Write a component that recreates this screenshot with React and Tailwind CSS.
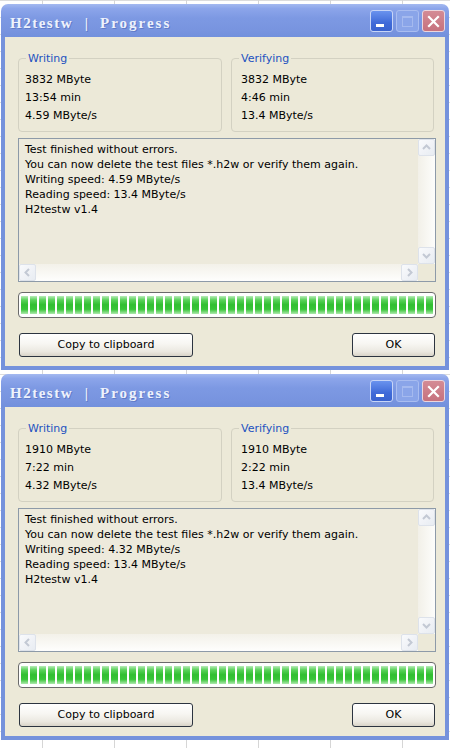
import React from "react";

function TitleText() {
  return (
    <div className="flex font-['Liberation_Serif',serif] font-bold text-[15px] leading-[18px] whitespace-nowrap text-[#eef2fc] [text-shadow:1px_1px_0_#5f7bc8]">
      <span className="w-[63px] tracking-[1.5px]">H2testw</span>
      <span className="w-[27px] text-center"> | </span>
      <span className="w-[74px] tracking-[2px]">Progress</span>
    </div>
  );
}

function TitleBar() {
  return (
    <div className="h-[33px] rounded-t-[7px] bg-[linear-gradient(to_bottom,#a4b9f0_0%,#8ca5ea_14%,#7d99e3_42%,#7894df_80%,#7290dc_100%)] flex items-start justify-between pl-[9px] pr-[4px]">
      <div className="pt-[10px]">
        <TitleText />
      </div>
      <div className="flex gap-[3px] pt-[6px]">
        <div className="w-[23px] h-[22px] rounded-[3px] border border-[#c7d5f7] bg-[linear-gradient(to_bottom,#6a93ee,#3f6ad8_60%,#3a63cf)] relative">
          <div className="absolute left-[5px] bottom-[4px] w-[8px] h-[3px] bg-white"></div>
        </div>
        <div className="w-[23px] h-[22px] rounded-[3px] border border-[#a9bdf0] bg-[#8aa5e9] flex items-center justify-center">
          <div className="w-[11px] h-[11px] border border-[#a5baef] border-t-2"></div>
        </div>
        <div className="w-[23px] h-[22px] rounded-[3px] border border-[#ecd6dc] bg-[linear-gradient(to_bottom,#d48b95,#c6727e)] flex items-center justify-center">
          <svg width="13" height="13" viewBox="0 0 13 13">
            <path d="M2 2 L11 11 M11 2 L2 11" stroke="#ffffff" strokeWidth="2.2" strokeLinecap="square" />
          </svg>
        </div>
      </div>
    </div>
  );
}

function GroupBox({ label, lines, width, pl }) {
  return (
    <div className={`relative h-[74px] rounded-[4px] border border-[#d3d1c2] pt-[12px] ${width} ${pl}`}>
      <div className="absolute -top-[7px] left-[7px] px-[2px] bg-[#ECE9D8] text-[#2352c0] leading-[13px]">
        {label}
      </div>
      {lines.map((l, i) => (
        <div key={i} className="leading-[18px] text-black">
          {l}
        </div>
      ))}
    </div>
  );
}

const ARROWS = {
  up: "M4 9 L7.5 5.5 L11 9",
  down: "M4 6 L7.5 9.5 L11 6",
  left: "M9 4 L5.5 7.5 L9 11",
  right: "M6 4 L9.5 7.5 L6 11",
};

function ScrollBtn({ dir }) {
  return (
    <div className="w-[17px] h-[17px] shrink-0 rounded-[2px] border border-[#dde2ea] bg-[linear-gradient(135deg,#f9fafc,#e8ecf2)] flex items-center justify-center">
      <svg width="15" height="15" viewBox="0 0 15 15">
        <path d={ARROWS[dir]} fill="none" stroke="#c3c9d4" strokeWidth="2" />
      </svg>
    </div>
  );
}

function Memo({ lines }) {
  return (
    <div className="ml-[13px] mt-[6px] w-[418px] h-[144px] border border-[#8d9aa8] bg-[#EDEADC] flex flex-col">
      <div className="flex flex-1 min-h-0">
        <div className="flex-1 pl-[6px] pt-[3px]">
          {lines.map((l, i) => (
            <div key={i} className="leading-[15px] text-black whitespace-nowrap">
              {l}
            </div>
          ))}
        </div>
        <div className="w-[17px] flex flex-col bg-[linear-gradient(to_right,#f2f0e8,#fdfdfb)]">
          <ScrollBtn dir="up" />
          <div className="flex-1"></div>
          <ScrollBtn dir="down" />
        </div>
      </div>
      <div className="h-[17px] flex">
        <div className="flex-1 flex bg-[linear-gradient(to_bottom,#f3f1e9,#fefefd)]">
          <ScrollBtn dir="left" />
          <div className="flex-1"></div>
          <ScrollBtn dir="right" />
        </div>
        <div className="w-[17px] bg-[#ECE9D8]"></div>
      </div>
    </div>
  );
}

function ProgressBar() {
  return (
    <div className="ml-[13px] mt-[10px] w-[418px] h-[26px] rounded-[4px] border border-[#6a6a6a] bg-white px-[2px] py-[3px] flex gap-[2px] overflow-hidden">
      {Array.from({ length: 46 }).map((_, i) => (
        <div
          key={i}
          className="w-[7px] shrink-0 bg-[linear-gradient(to_bottom,#b9ecb9_0%,#5ad25a_22%,#31bf31_48%,#38c438_74%,#aee9ae_100%)]"
        ></div>
      ))}
    </div>
  );
}

function Button({ children, w }) {
  return (
    <div
      className={`h-[24px] rounded-[3px] border border-[#2c3440] bg-[linear-gradient(to_bottom,#ffffff_0%,#f7f6f2_45%,#ebe8e0_80%,#d9d4c8_100%)] flex items-center justify-center text-black ${w}`}
    >
      {children}
    </div>
  );
}

function ProgressWindow(props) {
  return (
    <div className="ml-[1px] w-[448px] h-[366px] flex flex-col font-['DejaVu_Sans',sans-serif] text-[11px]">
      <TitleBar />
      <div className="flex-1 flex flex-col bg-[#7592dc] px-[4px] pb-[4px]">
        <div className="flex-1 bg-[#ECE9D8] flex flex-col pt-[21px]">
          <div className="flex ml-[13px] gap-[9px]">
            <GroupBox label="Writing" lines={props.w} width="w-[204px]" pl="pl-[6px]" />
            <GroupBox label="Verifying" lines={props.v} width="w-[203px]" pl="pl-[9px]" />
          </div>
          <Memo lines={props.memo} />
          <ProgressBar />
          <div className="flex ml-[14px] w-[416px] justify-between mt-[15px]">
            <Button w="w-[174px]">Copy to clipboard</Button>
            <Button w="w-[83px]">OK</Button>
          </div>
        </div>
      </div>
    </div>
  );
}

export default function App() {
  return (
    <div className="w-[450px] h-[748px] overflow-hidden bg-white bg-[linear-gradient(to_right,#d6d6d6_1px,transparent_1px),linear-gradient(to_bottom,#dcdcdc_1px,transparent_1px)] bg-[size:72px_17px] bg-[position:42px_0] pt-[4px] flex flex-col gap-[4px]">
      <ProgressWindow
        w={["3832 MByte", "13:54 min", "4.59 MByte/s"]}
        v={["3832 MByte", "4:46 min", "13.4 MByte/s"]}
        memo={[
          "Test finished without errors.",
          "You can now delete the test files *.h2w or verify them again.",
          "Writing speed: 4.59 MByte/s",
          "Reading speed: 13.4 MByte/s",
          "H2testw v1.4",
        ]}
      />
      <ProgressWindow
        w={["1910 MByte", "7:22 min", "4.32 MByte/s"]}
        v={["1910 MByte", "2:22 min", "13.4 MByte/s"]}
        memo={[
          "Test finished without errors.",
          "You can now delete the test files *.h2w or verify them again.",
          "Writing speed: 4.32 MByte/s",
          "Reading speed: 13.4 MByte/s",
          "H2testw v1.4",
        ]}
      />
    </div>
  );
}
